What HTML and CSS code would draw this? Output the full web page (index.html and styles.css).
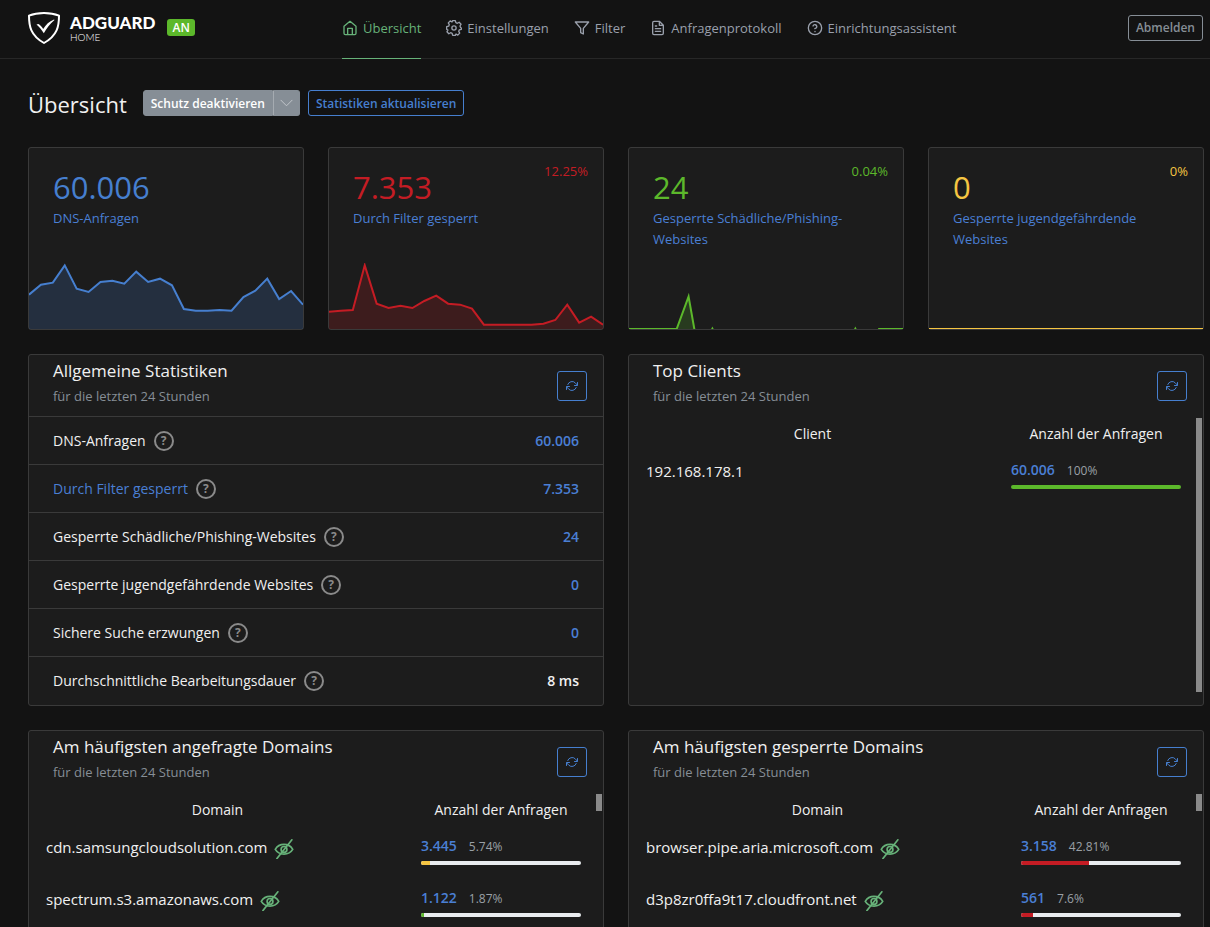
FILE: index.html
```
<!DOCTYPE html>
<html lang="de">
<head>
    <meta charset="UTF-8">
    <meta name="viewport" content="width=device-width, initial-scale=1.0">
    <title>AdGuard Home</title>
    <link rel="stylesheet" href="styles.css">
</head>
<body>
    <!-- icons used more than once -->
    <svg class="sprite" aria-hidden="true">
        <symbol id="refresh" viewBox="0 0 24 24">
            <path d="M23 5v6h-6M1 19v-6h6M3.5 9a9 9 0 0 1 14.9-3.4L23 10.500M1 13.500l4.600 4.900A9 9 0 0 0 20.500 15"/>
        </symbol>
        <symbol id="eye-off" viewBox="0 0 24 24">
            <path d="M1.500 12.500C6 4.500 18 4.500 22.500 12.500C18 20 6 20 1.500 12.500zM21.500 1L3.500 23.500"/>
            <circle cx="12" cy="12.500" r="3.500"/>
        </symbol>
    </svg>

    <header class="header">
        <div class="brand">
            <a href="#" class="logo" aria-label="AdGuard Home">
                <svg class="shield" viewBox="0 0 32 32">
                    <path d="M16 1C11 1 5.500 1.800 1 3.700C1 14 2.500 23.500 16 31C29.500 23.500 31 14 31 3.700C26.500 1.800 21 1 16 1z"/>
                    <path class="check" d="M8.500 12.500L10.500 12C12.500 13 14 15 15.200 17C18 12.500 21 9.500 26 7.500L26.500 8C22 12 18.500 16.500 15.800 21.200C13.500 18 11.500 15 8.500 12.500z"/>
                </svg>
                <span class="logo-text">
                    <strong>ADGUARD</strong>
                    <small>HOME</small>
                </span>
            </a>
            <span class="badge">AN</span>
        </div>
        <nav class="nav">
            <a href="#" class="nav-link active">
                <svg viewBox="0 0 24 24"><path d="M3 9.500L12 2l9 7.500V20a2 2 0 0 1-2 2H5a2 2 0 0 1-2-2zM8.500 22V12.500h7V22"/></svg>
                Übersicht
            </a>
            <a href="#" class="nav-link">
                <svg viewBox="0 0 24 24"><circle cx="12" cy="12" r="3.200"/><path d="M10 1h4l.8 3 2.200.9 2.700-1.500 2.900 2.900L21 9l.9 2.200L23 12v2l-3 .8-.9 2.200 1.500 2.700-2.900 2.900L15 21l-1 2h-4l-.8-3-2.200-.9-2.700 1.500-2.900-2.900L3 15l-2-1v-4l3-.8L4.900 7 3.400 4.300l2.900-2.900L9 3z"/></svg>
                Einstellungen
            </a>
            <a href="#" class="nav-link">
                <svg viewBox="0 0 24 24"><path d="M22 3H2l8 9.500V19l4 2v-8.500z"/></svg>
                Filter
            </a>
            <a href="#" class="nav-link">
                <svg viewBox="0 0 24 24"><path d="M14 2H6a2 2 0 0 0-2 2v16a2 2 0 0 0 2 2h12a2 2 0 0 0 2-2V8zM14 2v6h6M16 13H8M16 17H8M10 9H8"/></svg>
                Anfragenprotokoll
            </a>
            <a href="#" class="nav-link">
                <svg viewBox="0 0 24 24"><circle cx="12" cy="12" r="10"/><path d="M9 9a3 3 0 0 1 5.800 1c0 2-3 3-3 3M12 17v.5"/></svg>
                Einrichtungsassistent
            </a>
        </nav>
        <button class="btn btn-grey" type="button">Abmelden</button>
    </header>

    <main class="content">
        <div class="page-title">
            <h1>Übersicht</h1>
            <div class="btn-group">
                <button class="btn btn-protect" type="button">Schutz deaktivieren</button>
                <button class="btn btn-toggle" type="button" aria-label="Mehr">
                    <svg viewBox="0 0 14 8"><path d="M1 1l6 6 6-6"/></svg>
                </button>
            </div>
            <button class="btn btn-blue" type="button">Statistiken aktualisieren</button>
        </div>

        <div class="counters">
            <section class="card counter blue">
                <div class="value">60.006</div>
                <a href="#">DNS-Anfragen</a>
                <svg class="chart" viewBox="0 0 276 198" preserveAspectRatio="none">
                    <polygon points="0,95 12,65 24,59 36,7 48,77 60,87 72,57 84,53 96,62 108,26 120,57 132,47 144,67 156,138 168,143 180,143 192,141 204,143 216,102 228,83 240,47 252,108 264,84 276,125 276,198 0,198"/>
                    <polyline points="0,95 12,65 24,59 36,7 48,77 60,87 72,57 84,53 96,62 108,26 120,57 132,47 144,67 156,138 168,143 180,143 192,141 204,143 216,102 228,83 240,47 252,108 264,84 276,125"/>
                </svg>
            </section>
            <section class="card counter red">
                <div class="value">7.353</div>
                <div class="percent">12.25%</div>
                <a href="#">Durch Filter gesperrt</a>
                <svg class="chart" viewBox="0 0 276 198" preserveAspectRatio="none">
                    <polygon points="0,146 12,143 24,141 36,7 48,122 60,135 72,128 84,135 96,114 108,98 120,122 132,125 144,137 156,185 204,185 216,182 228,171 240,125 252,179 264,161 276,185 276,198 0,198"/>
                    <polyline points="0,146 12,143 24,141 36,7 48,122 60,135 72,128 84,135 96,114 108,98 120,122 132,125 144,137 156,185 204,185 216,182 228,171 240,125 252,179 264,161 276,185"/>
                </svg>
            </section>
            <section class="card counter green">
                <div class="value">24</div>
                <div class="percent">0.04%</div>
                <a href="#">Gesperrte Schädliche/Phishing-<br>Websites</a>
                <svg class="chart" viewBox="0 0 276 198" preserveAspectRatio="none">
                    <polygon points="48,198 60,101 66,198"/>
                    <polyline points="0,198 48,198 60,101 66,201"/>
                    <polyline points="83,203 84,197 85,203"/>
                    <polyline points="227,203 228,197 229,203"/>
                    <polyline points="251,198 276,198"/>
                </svg>
            </section>
            <section class="card counter yellow">
                <div class="value">0</div>
                <div class="percent">0%</div>
                <a href="#">Gesperrte jugendgefährdende Websites</a>
                <svg class="chart" viewBox="0 0 276 198" preserveAspectRatio="none">
                    <polyline points="0,198 276,198"/>
                </svg>
            </section>
        </div>

        <div class="panels">
            <section class="card panel">
                <div class="card-header lined">
                    <div class="card-title">
                        <h2>Allgemeine Statistiken</h2>
                        <p>für die letzten 24 Stunden</p>
                    </div>
                    <button class="btn-refresh" type="button" aria-label="Aktualisieren"><svg><use href="#refresh"/></svg></button>
                </div>
                <ul class="stats">
                    <li>DNS-Anfragen <span class="help">?</span> <a href="#">60.006</a></li>
                    <li><a href="#">Durch Filter gesperrt</a> <span class="help">?</span> <a href="#">7.353</a></li>
                    <li>Gesperrte Schädliche/Phishing-Websites <span class="help">?</span> <a href="#">24</a></li>
                    <li>Gesperrte jugendgefährdende Websites <span class="help">?</span> <a href="#">0</a></li>
                    <li>Sichere Suche erzwungen <span class="help">?</span> <a href="#">0</a></li>
                    <li>Durchschnittliche Bearbeitungsdauer <span class="help">?</span> <b>8 ms</b></li>
                </ul>
            </section>

            <section class="card panel">
                <div class="card-header">
                    <div class="card-title">
                        <h2>Top Clients</h2>
                        <p>für die letzten 24 Stunden</p>
                    </div>
                    <button class="btn-refresh" type="button" aria-label="Aktualisieren"><svg><use href="#refresh"/></svg></button>
                </div>
                <div class="table-wrap">
                    <table class="clients">
                        <thead>
                            <tr><th>Client</th><th class="count">Anzahl der Anfragen</th></tr>
                        </thead>
                        <tbody>
                            <tr>
                                <td>192.168.178.1</td>
                                <td><div class="num"><a href="#">60.006</a> <span>100%</span></div><div class="bar"><div class="bar-green" style="width: 100%"></div></div></td>
                            </tr>
                        </tbody>
                    </table>
                    <div class="scroll scroll-full"></div>
                </div>
            </section>

            <section class="card panel">
                <div class="card-header">
                    <div class="card-title">
                        <h2>Am häufigsten angefragte Domains</h2>
                        <p>für die letzten 24 Stunden</p>
                    </div>
                    <button class="btn-refresh" type="button" aria-label="Aktualisieren"><svg><use href="#refresh"/></svg></button>
                </div>
                <div class="table-wrap">
                    <table>
                        <thead>
                            <tr><th>Domain</th><th class="count">Anzahl der Anfragen</th></tr>
                        </thead>
                        <tbody>
                            <tr>
                                <td>cdn.samsungcloudsolution.com <svg class="eye"><use href="#eye-off"/></svg></td>
                                <td><div class="num"><a href="#">3.445</a> <span>5.74%</span></div><div class="bar"><div class="bar-yellow" style="width: 5.74%"></div></div></td>
                            </tr>
                            <tr>
                                <td>spectrum.s3.amazonaws.com <svg class="eye"><use href="#eye-off"/></svg></td>
                                <td><div class="num"><a href="#">1.122</a> <span>1.87%</span></div><div class="bar"><div class="bar-green" style="width: 1.87%"></div></div></td>
                            </tr>
                        </tbody>
                    </table>
                    <div class="scroll"></div>
                </div>
            </section>

            <section class="card panel">
                <div class="card-header">
                    <div class="card-title">
                        <h2>Am häufigsten gesperrte Domains</h2>
                        <p>für die letzten 24 Stunden</p>
                    </div>
                    <button class="btn-refresh" type="button" aria-label="Aktualisieren"><svg><use href="#refresh"/></svg></button>
                </div>
                <div class="table-wrap">
                    <table>
                        <thead>
                            <tr><th>Domain</th><th class="count">Anzahl der Anfragen</th></tr>
                        </thead>
                        <tbody>
                            <tr>
                                <td>browser.pipe.aria.microsoft.com <svg class="eye"><use href="#eye-off"/></svg></td>
                                <td><div class="num"><a href="#">3.158</a> <span>42.81%</span></div><div class="bar"><div class="bar-red" style="width: 42.81%"></div></div></td>
                            </tr>
                            <tr>
                                <td>d3p8zr0ffa9t17.cloudfront.net <svg class="eye"><use href="#eye-off"/></svg></td>
                                <td><div class="num"><a href="#">561</a> <span>7.6%</span></div><div class="bar"><div class="bar-red" style="width: 7.6%"></div></div></td>
                            </tr>
                        </tbody>
                    </table>
                    <div class="scroll"></div>
                </div>
            </section>
        </div>
    </main>
</body>
</html>
```
FILE: styles.css
```
* {
    box-sizing: border-box;
}

body {
    margin: 0;
    height: 100vh;
    overflow: hidden;
    background: #131313;
    color: #f0f0f0;
    font-family: "Segoe UI", "Open Sans", "Noto Sans", sans-serif;
    font-size: 14px;
    line-height: 22px;
}

h1, h2, p, ul {
    margin: 0;
    padding: 0;
    font-weight: 400;
}

a {
    color: #4a7fd4;
    text-decoration: none;
}

svg {
    fill: none;
    stroke: currentColor;
    stroke-width: 2;
    stroke-linecap: round;
    stroke-linejoin: round;
}

.sprite {
    display: none;
}

/* header */
.header {
    display: flex;
    align-items: center;
    height: 59px;
    padding: 0 7px 3px 28px;
    border-bottom: 1px solid #272727;
}

.brand {
    display: flex;
    align-items: center;
    flex: 0 0 314px;
    gap: 12px;
}

.logo {
    display: flex;
    align-items: center;
    gap: 10px;
    color: #fff;
}

.shield {
    width: 32px;
    height: 32px;
}

.shield .check {
    fill: currentColor;
    stroke: none;
}

.logo-text {
    display: flex;
    flex-direction: column;
    padding-top: 3px;
    font-family: Lato, sans-serif;
}

.logo-text strong {
    font-size: 17px;
    font-weight: 900;
    line-height: 17px;
}

.logo-text small {
    font-size: 10px;
    font-weight: 300;
    line-height: 13px;
}

.badge {
    padding: 0 5px;
    border-radius: 3px;
    background: #5cb82b;
    color: #fff;
    font-size: 12px;
    font-weight: 600;
    line-height: 17px;
}

.nav {
    display: flex;
    align-self: stretch;
    gap: 25px;
    margin-right: auto;
    margin-bottom: -4px;
}

.nav-link {
    display: flex;
    align-items: center;
    gap: 5px;
    padding-bottom: 2px;
    border-bottom: 1px solid transparent;
    color: #9aa0ac;
    font-size: 13px;
    white-space: nowrap;
}

.nav-link svg {
    width: 16px;
    height: 16px;
}

.nav-link.active {
    border-color: #67b279;
    color: #67b279;
}

/* buttons */
.btn {
    height: 26px;
    padding: 0 7px;
    border: 1px solid;
    border-radius: 3px;
    background: transparent;
    font-family: inherit;
    font-size: 12px;
    font-weight: 600;
    white-space: nowrap;
}

.btn-grey {
    border-color: #868e96;
    color: #868e96;
}

.btn-blue {
    border-color: #467fcf;
    color: #467fcf;
}

.btn-group {
    display: flex;
}

.btn-protect {
    border-color: #868e96;
    border-radius: 3px 0 0 3px;
    background: #868e96;
    color: #fff;
}

.btn-toggle {
    width: 27px;
    padding: 0 6px;
    border-color: #868e96;
    border-left-color: #a5abb1;
    border-radius: 0 3px 3px 0;
    background: #868e96;
    color: #c5c9cd;
}

.btn-toggle svg {
    display: block;
    width: 13px;
    height: 8px;
    stroke-width: 1;
}

.btn-refresh {
    width: 30px;
    height: 30px;
    padding: 8px;
    border: 1px solid #467fcf;
    border-radius: 3px;
    background: transparent;
    color: #467fcf;
}

.btn-refresh svg {
    display: block;
    width: 12px;
    height: 12px;
}

/* page */
.content {
    padding: 28px 6px 24px 28px;
}

.page-title {
    display: flex;
    align-items: center;
    gap: 8px;
    height: 32px;
    margin-bottom: 28px;
}

.page-title h1 {
    padding-top: 2px;
    margin-right: 8px;
    font-size: 22px;
    line-height: 30px;
}

.card {
    border: 1px solid #3a3a3a;
    border-radius: 3px;
    background: #1c1c1c;
}

.counters {
    display: grid;
    grid-template-columns: repeat(4, 1fr);
    gap: 24px;
    margin-bottom: 24px;
}

.counter {
    position: relative;
    display: flex;
    flex-direction: column;
    height: 183px;
    padding-top: 19px;
}

.counter a {
    padding: 0 24px;
    font-size: 13px;
    line-height: 21px;
}

.value {
    padding: 0 24px;
    font-size: 31px;
    line-height: 41px;
}

.percent {
    position: absolute;
    top: 12px;
    right: 15px;
    font-size: 13px;
}

.chart {
    width: 100%;
    height: 66px;
    margin-top: auto;
}

.chart polyline {
    stroke-linecap: butt;
    stroke-linejoin: miter;
    vector-effect: non-scaling-stroke;
}

.chart polygon {
    fill: currentColor;
    opacity: .2;
    stroke: none;
}

.blue {
    color: #467fcf;
}

.red {
    color: #c41c24;
}

.green {
    color: #5cb82b;
}

.yellow {
    color: #f5c542;
}

/* panels */
.panels {
    display: grid;
    grid-template-columns: repeat(2, 1fr);
    gap: 24px;
}

.panel {
    display: flex;
    flex-direction: column;
    min-height: 352px;
}

.card-header {
    display: flex;
    align-items: center;
    justify-content: space-between;
    height: 62px;
    padding: 0 16px 0 24px;
    border-bottom: 1px solid transparent;
}

.card-header.lined {
    border-color: #3a3a3a;
}

.card-title {
    padding-bottom: 7px;
}

.card-header h2 {
    font-size: 17px;
    line-height: 28px;
}

.card-header p {
    color: #868e96;
    font-size: 13px;
}

.stats {
    list-style: none;
}

.stats li {
    display: flex;
    align-items: center;
    gap: 8px;
    height: 48px;
    padding: 0 24px;
    border-bottom: 1px solid #3a3a3a;
}

.stats li:last-child {
    border-bottom: none;
}

.stats li :last-child {
    margin-left: auto;
    font-weight: 600;
}

.help {
    width: 20px;
    height: 20px;
    border: 2px solid #8a8a8a;
    border-radius: 50%;
    color: #8a8a8a;
    font-size: 12px;
    font-weight: 700;
    line-height: 16px;
    text-align: center;
}

.table-wrap {
    display: flex;
    flex: 1;
    align-items: flex-start;
    padding-right: 1px;
}

table {
    flex: 1;
    border-collapse: collapse;
    table-layout: fixed;
}

th {
    height: 33px;
    padding: 0;
    font-weight: 400;
}

.count {
    width: 190px;
}

.clients .count {
    width: 200px;
}

td {
    height: 52px;
    padding: 10px 15px 0 17px;
    font-size: 15px;
    vertical-align: top;
}

td:last-child {
    padding-left: 15px;
    font-size: 14px;
}

.eye {
    width: 20px;
    height: 20px;
    margin-left: 3px;
    color: #67b279;
    vertical-align: middle;
}

.num {
    display: flex;
    align-items: baseline;
    gap: 12px;
    line-height: 20px;
}

.num a {
    font-weight: 600;
}

.num span {
    color: #9aa0a6;
    font-size: 12px;
}

.bar {
    height: 4px;
    margin-top: 4px;
    overflow: hidden;
    border-radius: 3px;
    background: #e9ecef;
}

.bar div {
    height: 4px;
}

.bar-green {
    background: #5cb82b;
}

.bar-yellow {
    background: #f5c542;
}

.bar-red {
    background: #c41c24;
}

.scroll {
    width: 6px;
    height: 17px;
    margin-top: 1px;
    background: #8a8a8a;
}

.scroll-full {
    height: 274px;
}
```
